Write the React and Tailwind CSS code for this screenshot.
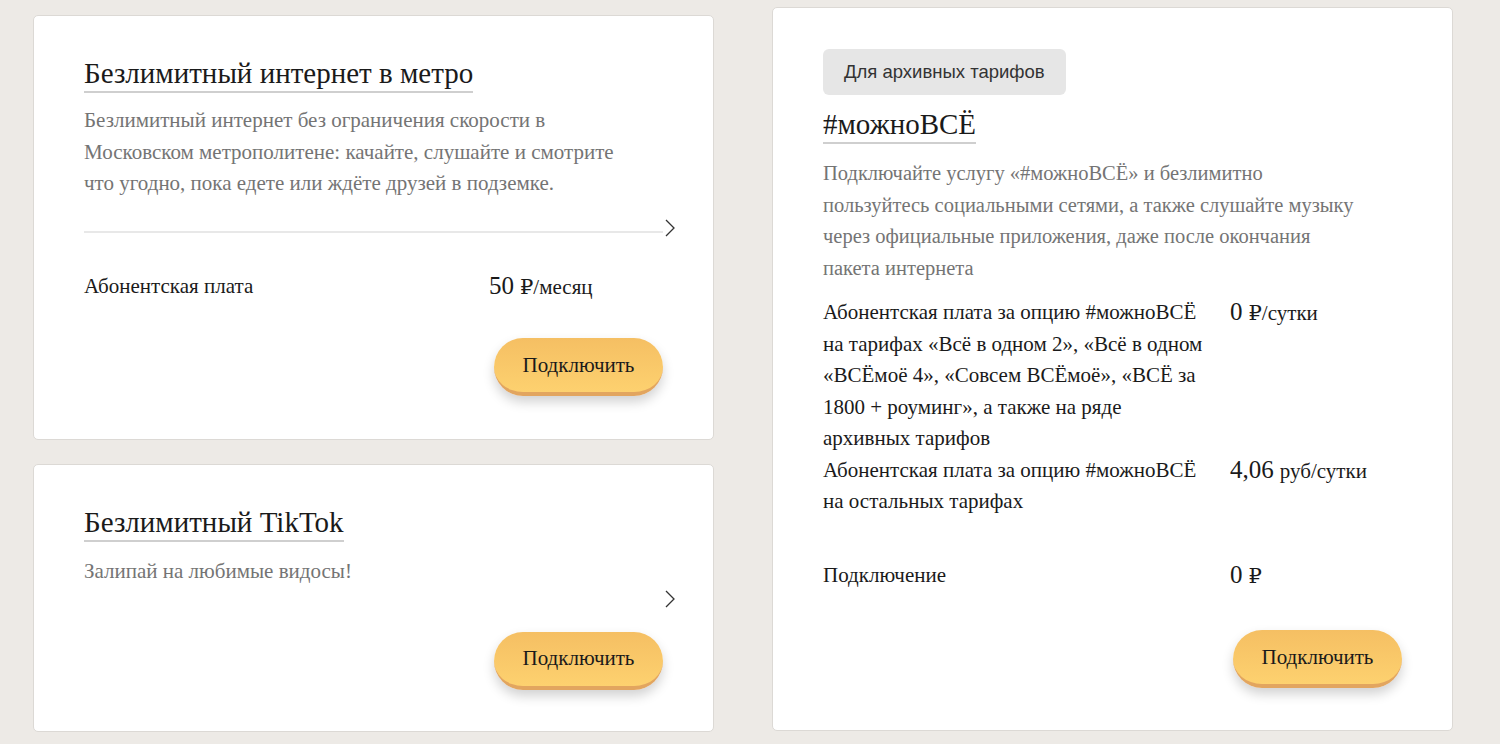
import React from 'react';

const serif = "font-['Liberation_Serif','DejaVu_Serif',serif]";

function Chevron() {
  return (
    <svg width="14" height="20" viewBox="0 0 14 20" className="shrink-0">
      <path d="M3 2 L11 10 L3 18" fill="none" stroke="#333" strokeWidth="1.3" />
    </svg>
  );
}

function ConnectButton() {
  return (
    <button className="w-[169px] h-[58px] rounded-full bg-gradient-to-b from-[#f5bf63] to-[#fdd16f] border-b-[4px] border-[#e2a55f] shadow-[0_6px_12px_rgba(0,0,0,0.18)] text-[21px] text-[#1a1a1a] leading-none">
      Подключить
    </button>
  );
}

function Title({ children }) {
  return (
    <div>
      <h2 className="inline-block text-[29px] leading-[34px] text-[#1a1a1a] border-b-2 border-[#cfcfcf] pb-[1px]">
        {children}
      </h2>
    </div>
  );
}

function Price({ num, unit }) {
  return (
    <div className="flex items-baseline gap-[6px] text-[#1a1a1a]">
      <span className="text-[25px] leading-[30px]">{num}</span>
      <span className="text-[21px]">{unit}</span>
    </div>
  );
}

export default function App() {
  return (
    <div className={`min-h-screen bg-[#edeae6] ${serif} flex gap-[58px] px-[33px] pt-[7px] overflow-hidden h-[744px]`}>
      {/* Left column */}
      <div className="flex flex-col gap-[24px] w-[681px] pt-[8px]">
        <div className="bg-white border border-[#dcd9d5] rounded-[5px] h-[425px] pl-[50px] pr-[50px] pt-[40px]">
          <Title>Безлимитный интернет в метро</Title>
          <p className="mt-[12px] text-[21px] leading-[31.5px] text-[#747474] whitespace-nowrap">
            Безлимитный интернет без ограничения скорости в<br />
            Московском метрополитене: качайте, слушайте и смотрите<br />
            что угодно, пока едете или ждёте друзей в подземке.
          </p>
          <div className="mt-[18px] flex items-center mr-[-14px]">
            <div className="flex-1 h-[2px] bg-[#e8e8e8] mt-[8px]" />
            <Chevron />
          </div>
          <div className="mt-[33px] flex items-center">
            <div className="w-[405px] text-[21px] text-[#1a1a1a]">Абонентская плата</div>
            <Price num="50" unit="₽/месяц" />
          </div>
          <div className="mt-[35px] flex justify-end">
            <ConnectButton />
          </div>
        </div>

        <div className="bg-white border border-[#dcd9d5] rounded-[5px] h-[268px] pl-[50px] pr-[50px] pt-[40px]">
          <Title>Безлимитный TikTok</Title>
          <p className="mt-[14px] text-[21px] leading-[31.5px] text-[#747474]">Залипай на любимые видосы!</p>
          <div className="mt-[1px] flex justify-end mr-[-14px]">
            <Chevron />
          </div>
          <div className="mt-[23px] flex justify-end">
            <ConnectButton />
          </div>
        </div>
      </div>

      {/* Right column */}
      <div className="w-[681px]">
        <div className="bg-white border border-[#dcd9d5] rounded-[5px] h-[724px] pl-[50px] pr-[50px] pt-[41px]">
          <div className="inline-block bg-[#e6e6e6] rounded-[6px] px-[21px] h-[46px] leading-[46px] text-[18.5px] text-[#333] font-['Liberation_Sans',Arial,sans-serif]">
            Для архивных тарифов
          </div>
          <div className="mt-[12px]">
            <Title>#можноВСЁ</Title>
          </div>
          <p className="mt-[14px] text-[20.5px] leading-[31.5px] text-[#747474] whitespace-nowrap">
            Подключайте услугу «#можноВСЁ» и безлимитно<br />
            пользуйтесь социальными сетями, а также слушайте музыку<br />
            через официальные приложения, даже после окончания<br />
            пакета интернета
          </p>
          <div className="mt-[13px] flex flex-col">
            <div className="flex items-start">
              <div className="w-[407px] text-[21px] leading-[31.5px] text-[#1a1a1a] whitespace-nowrap">
                Абонентская плата за опцию #можноВСЁ<br />
                на тарифах «Всё в одном 2», «Всё в одном<br />
                «ВСЁмоё 4», «Совсем ВСЁмоё», «ВСЁ за<br />
                1800 + роуминг», а также на ряде<br />
                архивных тарифов
              </div>
              <Price num="0" unit="₽/сутки" />
            </div>
            <div className="flex items-start">
              <div className="w-[407px] text-[21px] leading-[31.5px] text-[#1a1a1a] whitespace-nowrap">
                Абонентская плата за опцию #можноВСЁ<br />
                на остальных тарифах
              </div>
              <Price num="4,06" unit="руб/сутки" />
            </div>
            <div className="flex items-center mt-[42px]">
              <div className="w-[407px] text-[21px] text-[#1a1a1a]">Подключение</div>
              <Price num="0" unit="₽" />
            </div>
          </div>
          <div className="mt-[38px] flex justify-end">
            <ConnectButton />
          </div>
        </div>
      </div>
    </div>
  );
}
